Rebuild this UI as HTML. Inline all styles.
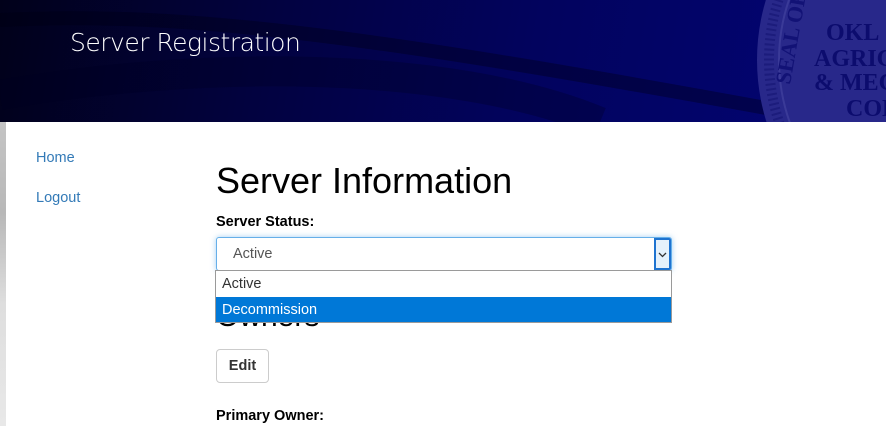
<!DOCTYPE html>
<html><head><style>
*{margin:0;padding:0;box-sizing:border-box}
body{width:886px;height:426px;overflow:hidden;background:#fff;font-family:"Liberation Sans",Arial,sans-serif;position:relative}
.hdr{position:absolute;left:0;top:0;width:886px;height:122px;overflow:hidden;
background:linear-gradient(100deg,#01011a 0%,#020240 30%,#02035e 60%,#030575 100%)}
.ttl{position:absolute;left:70px;top:28px;color:#fff;font-size:25px;font-family:"DejaVu Sans","Liberation Sans",sans-serif;font-weight:300;letter-spacing:-0.5px}
.strip{position:absolute;left:0;top:122px;width:6px;height:304px;background:linear-gradient(#c4c4c4,#b8b8b8 30%,#dedede 60%,#e8e8e8)}
a{color:#337ab7;text-decoration:none;font-size:14.5px;position:absolute;left:36px}
h1{position:absolute;left:216px;top:160px;font-size:36px;font-weight:normal;color:#000}
.lbl{position:absolute;left:216px;font-size:14.5px;font-weight:bold;color:#000}
.sel{position:absolute;left:216px;top:237px;width:456px;height:34px;border:1px solid #66afe9;border-radius:3px;box-shadow:0 0 6px rgba(102,175,233,.6);background:#fff;font-size:14.5px;color:#555;padding:8px 0 0 16px}
.arr{position:absolute;right:0;top:0;width:17px;height:32px;border:2px solid #1e73d0;background:#e5f1fb;border-radius:0 2px 2px 0}
.dd{position:absolute;left:215px;top:270px;width:457px;height:53px;border:1px solid #9a9a9a;background:#fff;font-size:14.5px}
.dd div{height:25.5px;padding:5px 0 0 6px;color:#333}
.dd .hl{background:#0078d7;color:#fff}
.own{position:absolute;left:216px;top:300px;font-size:30px;color:#000}
.btn{position:absolute;left:216px;top:349px;width:53px;height:34px;border:1px solid #ccc;border-radius:4px;font-size:14.5px;font-weight:bold;color:#333;text-align:center;line-height:32px}
</style></head><body>
<div class="hdr">
<svg width="886" height="122" style="position:absolute;left:0;top:0">
<path d="M0 20 C200 10 400 40 886 130" stroke="#000010" stroke-width="14" fill="none" opacity=".35"/>
<path d="M0 95 C200 60 450 60 600 122" stroke="#000020" stroke-width="30" fill="none" opacity=".3"/>
<circle cx="965" cy="60" r="208" fill="#28288a"/>
<circle cx="965" cy="60" r="196" fill="none" stroke="#1c1c7c" stroke-width="10" stroke-dasharray="2 3"/>
<circle cx="965" cy="60" r="186" fill="none" stroke="#3a3a98" stroke-width="2"/>
<text x="790" y="85" fill="#121276" font-family="Liberation Serif" font-size="22" font-weight="bold" transform="rotate(-80 790 85)">SEAL OF</text>
<text x="826" y="40" fill="#0c0c6e" font-family="Liberation Serif" font-size="24" font-weight="bold">OKL</text>
<text x="814" y="66" fill="#0c0c6e" font-family="Liberation Serif" font-size="24" font-weight="bold">AGRIC</text>
<text x="814" y="90" fill="#0c0c6e" font-family="Liberation Serif" font-size="24" font-weight="bold">&amp; MEC</text>
<text x="846" y="116" fill="#0c0c6e" font-family="Liberation Serif" font-size="24" font-weight="bold">COL</text>
</svg>
<div class="ttl">Server Registration</div>
</div>
<div class="strip"></div>
<a style="top:150px">Home</a>
<a style="top:190px">Logout</a>
<h1>Server Information</h1>
<div class="lbl" style="top:214px">Server Status:</div>
<div class="own">Owners</div>
<div class="sel">Active<div class="arr"><svg width="13" height="28" style="position:absolute;left:0;top:0"><path d="M3 13 L6.5 16.5 L10 13" stroke="#333" stroke-width="1.3" fill="none"/></svg></div></div>
<div class="dd"><div>Active</div><div class="hl">Decommission</div></div>
<div class="btn">Edit</div>
<div class="lbl" style="top:408px">Primary Owner:</div>
</body></html>
